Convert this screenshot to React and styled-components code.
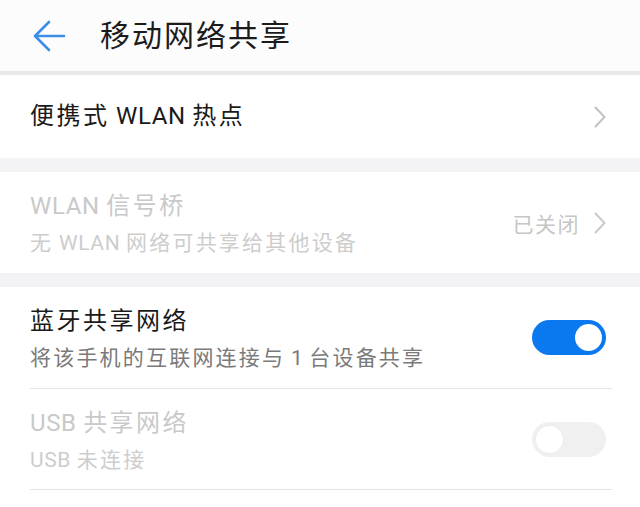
import React from 'react'
import styled, { createGlobalStyle } from 'styled-components'

const GlobalStyle = createGlobalStyle`
  html, body {
    margin: 0;
    padding: 0;
    background: #ffffff;
  }
  body {
    font-family: "Roboto", "Noto Sans CJK SC", sans-serif;
    -webkit-font-smoothing: antialiased;
  }
`

const Page = styled.div`
  width: 640px;
  min-height: 507px;
  background: #ffffff;
  overflow: hidden;
`

const Header = styled.div`
  height: 71px;
  display: flex;
  align-items: center;
  padding-left: 32px;
  background: #fcfcfd;
  border-bottom: 4px solid #e9e9eb;
`

const Title = styled.h1`
  margin: 0 0 0 34px;
  font-size: 30px;
  font-weight: 400;
  letter-spacing: 2px;
  color: #1b1b1b;
  line-height: 40px;
`

const Gap = styled.div`
  height: 14px;
  background: #f3f3f5;
`

const Row = styled.div`
  height: ${p => p.$h}px;
  display: flex;
  align-items: center;
  justify-content: space-between;
  padding: 0 34px 0 30px;
  background: #ffffff;
`

const Texts = styled.div`
  display: flex;
  flex-direction: column;
  gap: 5px;
  padding-top: 3px;
`

const Label = styled.div`
  font-size: 24px;
  line-height: 33px;
  letter-spacing: 2.5px;
  color: ${p => (p.$off ? '#c9c9c9' : '#1a1a1a')};
`

const Sub = styled.div`
  font-size: 21px;
  line-height: 30px;
  letter-spacing: 2.2px;
  color: ${p => (p.$off ? '#cdcdcd' : '#7a7a7a')};
`

// latin runs are set tighter than the CJK glyphs
const En = styled.span`
  letter-spacing: 0.6px;
`

const Right = styled.div`
  display: flex;
  align-items: center;
  gap: 14px;
  font-size: 21px;
  letter-spacing: 1.5px;
  color: #c6c6c6;
`

const Divider = styled.div`
  height: 1px;
  margin: 0 28px 0 30px;
  background: #e4e4e6;
`

const Track = styled.div`
  width: 74px;
  height: 35px;
  border-radius: 18px;
  background: ${p => (p.$on ? '#0a78ef' : '#f0f0f1')};
  display: flex;
  align-items: center;
  justify-content: ${p => (p.$on ? 'flex-end' : 'flex-start')};
  padding: 0 4px;
  box-sizing: border-box;
`

const Knob = styled.div`
  width: 27px;
  height: 27px;
  border-radius: 50%;
  background: #ffffff;
  box-shadow: ${p => (p.$on ? 'none' : '0 0 0 1px #ececec')};
`

const Chevron = ({ color = '#c2c2c2' }) => (
  <svg width="12" height="22" viewBox="0 0 12 22">
    <path d="M1.5 1.5 L10.5 11 L1.5 20.5" fill="none" stroke={color} strokeWidth="2" strokeLinecap="round" strokeLinejoin="round" />
  </svg>
)

const BackArrow = () => (
  <svg width="34" height="32" viewBox="0 0 34 32">
    <path d="M32 16 H3 M17 2 L3 16 L17 30" fill="none" stroke="#3a8ee8" strokeWidth="2.6" strokeLinecap="round" strokeLinejoin="round" />
  </svg>
)

const Switch = ({ on }) => (
  <Track $on={on}>
    <Knob $on={on} />
  </Track>
)

export default function App() {
  return (
    <Page>
      <GlobalStyle />
      <Header>
        <BackArrow />
        <Title>移动网络共享</Title>
      </Header>

      <Row $h={83}>
        <Label>便携式<En> WLAN </En>热点</Label>
        <Chevron />
      </Row>

      <Gap />

      <Row $h={101}>
        <Texts>
          <Label $off><En>WLAN </En>信号桥</Label>
          <Sub $off>无<En> WLAN </En>网络可共享给其他设备</Sub>
        </Texts>
        <Right>
          已关闭
          <Chevron color="#cacaca" />
        </Right>
      </Row>

      <Gap />

      <Row $h={101}>
        <Texts>
          <Label>蓝牙共享网络</Label>
          <Sub>将该手机的互联网连接与<En> 1 </En>台设备共享</Sub>
        </Texts>
        <Switch on />
      </Row>
      <Divider />
      <Row $h={100}>
        <Texts>
          <Label $off><En>USB </En>共享网络</Label>
          <Sub $off><En>USB </En>未连接</Sub>
        </Texts>
        <Switch />
      </Row>
      <Divider />
    </Page>
  )
}
